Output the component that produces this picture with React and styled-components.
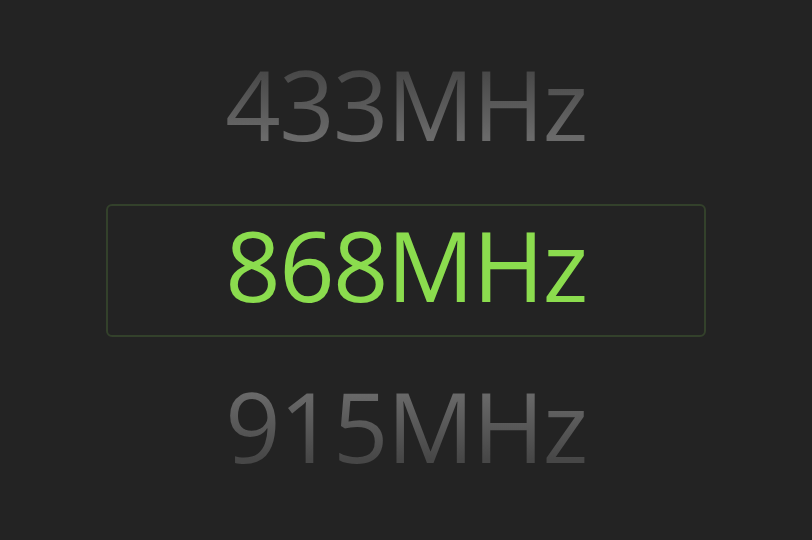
import React from 'react'
import styled, { createGlobalStyle } from 'styled-components'

const GlobalStyle = createGlobalStyle`
  html, body {
    margin: 0;
    padding: 0;
    background: #232323;
  }
  body {
    font-family: "Open Sans", "Noto Sans", sans-serif;
  }
`

const Screen = styled.div`
  width: 812px;
  height: 540px;
  display: flex;
  justify-content: center;
  align-items: center;
  background: #232323;
`

const Picker = styled.ul`
  list-style: none;
  margin: 0;
  padding: 0;
  display: flex;
  flex-direction: column;
  gap: 28px;
`

const Option = styled.li`
  box-sizing: border-box;
  width: 600px;
  height: 133px;
  padding-bottom: 11px;
  display: flex;
  justify-content: center;
  align-items: center;
  border: 2px solid ${p => (p.$selected ? '#33412b' : 'transparent')};
  border-radius: 6px;
`

const Label = styled.span`
  font-size: 97px;
  line-height: 1;
  letter-spacing: -1.5px;
  color: #8bdc4e;
  ${p => p.$fade && `
    color: transparent;
    background: linear-gradient(${p.$fade === 'up' ? '180deg' : '0deg'}, #474747 15%, #6a6a6a 85%);
    -webkit-background-clip: text;
    background-clip: text;
  `}
`

const bands = [
  { value: '433MHz', fade: 'up' },
  { value: '868MHz', selected: true },
  { value: '915MHz', fade: 'down' }
]

export default function App() {
  return (
    <>
      <GlobalStyle />
      <Screen>
        <Picker>
          {bands.map(b => (
            <Option key={b.value} $selected={b.selected}>
              <Label $fade={b.fade}>{b.value}</Label>
            </Option>
          ))}
        </Picker>
      </Screen>
    </>
  )
}
